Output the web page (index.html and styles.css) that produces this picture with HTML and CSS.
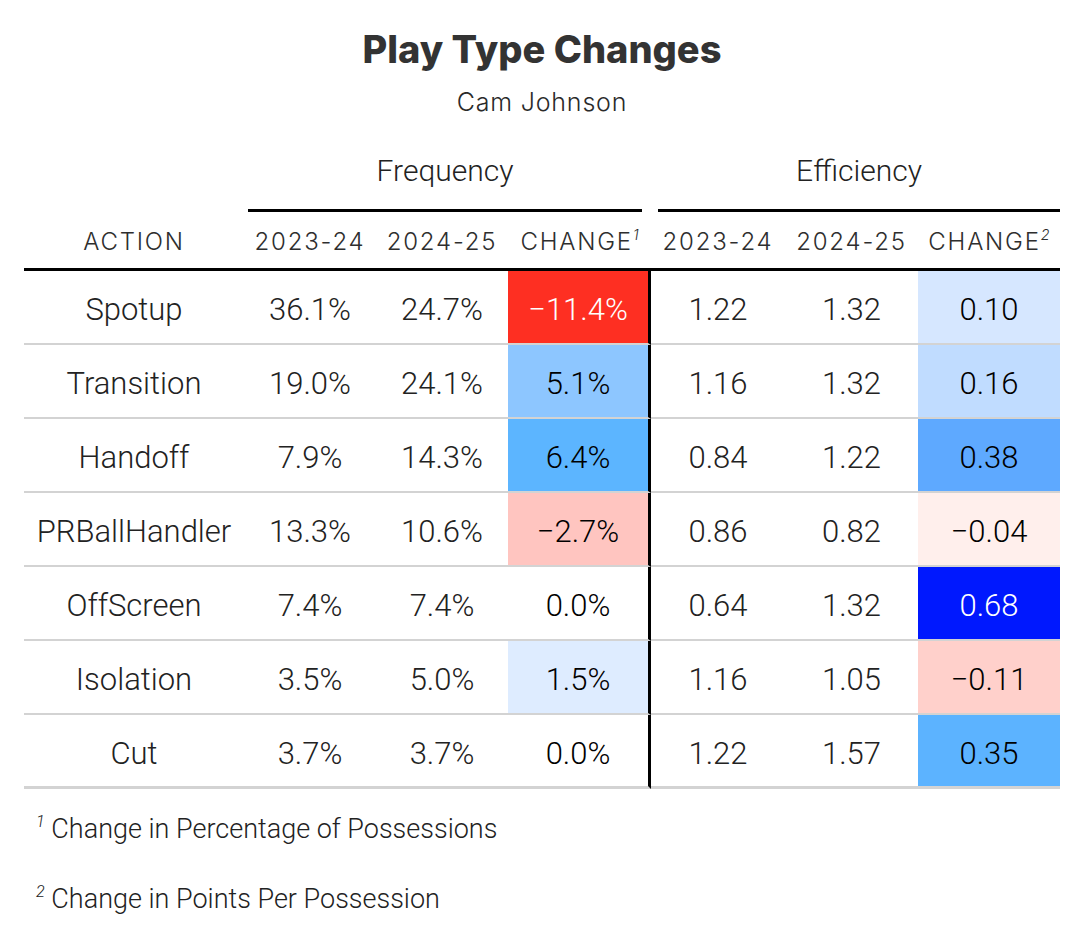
FILE: index.html
```html
<!DOCTYPE html>
<html lang="en">
<head>
<meta charset="utf-8">
<title>Play Type Changes</title>
<link rel="stylesheet" href="styles.css">
</head>
<body>
<div class="card">
  <header class="heading">
    <h1 class="title">Play Type Changes</h1>
    <p class="subtitle">Cam Johnson</p>
  </header>
  <table class="gt">
    <colgroup>
      <col class="w-action">
      <col class="w-num">
      <col class="w-num">
      <col class="w-chg">
      <col class="w-num2">
      <col class="w-num3">
      <col class="w-chg2">
    </colgroup>
    <thead>
      <tr class="spanners">
        <th></th>
        <th colspan="3"><div class="span-label span-freq">Frequency</div></th>
        <th colspan="3"><div class="span-label span-eff">Efficiency</div></th>
      </tr>
      <tr class="labels">
        <th>ACTION</th>
        <th>2023-24</th>
        <th>2024-25</th>
        <th class="divider">CHANGE<sup>1</sup></th>
        <th>2023-24</th>
        <th>2024-25</th>
        <th>CHANGE<sup>2</sup></th>
      </tr>
    </thead>
    <tbody>
      <tr>
        <td>Spotup</td><td>36.1%</td><td>24.7%</td>
        <td class="chg divider red1 light">−11.4%</td>
        <td>1.22</td><td>1.32</td>
        <td class="chg b-10">0.10</td>
      </tr>
      <tr>
        <td>Transition</td><td>19.0%</td><td>24.1%</td>
        <td class="chg divider f-51">5.1%</td>
        <td>1.16</td><td>1.32</td>
        <td class="chg b-16">0.16</td>
      </tr>
      <tr>
        <td>Handoff</td><td>7.9%</td><td>14.3%</td>
        <td class="chg divider f-64">6.4%</td>
        <td>0.84</td><td>1.22</td>
        <td class="chg b-38">0.38</td>
      </tr>
      <tr>
        <td>PRBallHandler</td><td>13.3%</td><td>10.6%</td>
        <td class="chg divider f-n27">−2.7%</td>
        <td>0.86</td><td>0.82</td>
        <td class="chg b-n04">−0.04</td>
      </tr>
      <tr>
        <td>OffScreen</td><td>7.4%</td><td>7.4%</td>
        <td class="chg divider">0.0%</td>
        <td>0.64</td><td>1.32</td>
        <td class="chg b-68 light">0.68</td>
      </tr>
      <tr>
        <td>Isolation</td><td>3.5%</td><td>5.0%</td>
        <td class="chg divider f-15">1.5%</td>
        <td>1.16</td><td>1.05</td>
        <td class="chg b-n11">−0.11</td>
      </tr>
      <tr class="last">
        <td>Cut</td><td>3.7%</td><td>3.7%</td>
        <td class="chg divider">0.0%</td>
        <td>1.22</td><td>1.57</td>
        <td class="chg b-35">0.35</td>
      </tr>
    </tbody>
  </table>
  <div class="notes">
    <p class="note"><sup>1</sup> Change in Percentage of Possessions</p>
    <p class="note"><sup>2</sup> Change in Points Per Possession</p>
  </div>
</div>
</body>
</html>
```

FILE: styles.css
```css
html, body {
  margin: 0;
  padding: 0;
  background: #ffffff;
}

.card {
  width: 1036px;
  margin-left: 24px;
  color: #333333;
  font-family: Roboto, "Noto Sans", sans-serif;
}

.heading {
  height: 140px;
  box-sizing: border-box;
  padding-top: 25px;
  text-align: center;
}

.title {
  margin: 0;
  font-family: Inter, "Liberation Sans", sans-serif;
  font-weight: 800;
  font-size: 38px;
  line-height: 48px;
  color: #333333;
}

.subtitle {
  margin: 13px 0 0;
  font-family: Inter, "Liberation Sans", sans-serif;
  font-weight: 300;
  font-size: 25px;
  letter-spacing: 0.8px;
  line-height: 32px;
  color: #2a2a2a;
}

.gt {
  border-collapse: separate;
  border-spacing: 0;
  table-layout: fixed;
  width: 1036px;
}

.w-action { width: 220px; }
.w-num { width: 132px; }
.w-chg { width: 143px; }
.w-num2 { width: 134px; }
.w-num3 { width: 133px; }
.w-chg2 { width: 142px; }

.gt th, .gt td {
  box-sizing: border-box;
  padding: 0;
  text-align: center;
  font-weight: 400;
}

.spanners th {
  height: 72px;
  vertical-align: bottom;
}

.span-label {
  font-family: Roboto, "Noto Sans", sans-serif;
  font-weight: 300;
  font-size: 30px;
  line-height: 40px;
  padding-bottom: 18px;
  border-bottom: 3px solid #000000;
  color: #222222;
}

.span-freq {
  margin-left: 4px;
  margin-right: 9px;
}

.span-eff {
  margin-left: 7px;
}

.labels th {
  height: 59px;
  border-bottom: 3px solid #000000;
  font-family: Inter, "Liberation Sans", sans-serif;
  font-size: 24px;
  font-weight: 300;
  letter-spacing: 1.8px;
  color: #2e2e2e;
  vertical-align: middle;
  padding-top: 2px;
}

.labels sup, .note sup {
  font-style: italic;
  font-size: 60%;
  line-height: 0;
  vertical-align: 0.7em;
  letter-spacing: 0;
}

.gt tbody td {
  height: 74px;
  padding-top: 5px;
  border-bottom: 2px solid #d3d3d3;
  font-size: 31px;
  font-weight: 300;
  color: #222222;
}

.gt tbody tr.last td {
  border-bottom: 3px solid #d3d3d3;
}

.gt tbody td.divider {
  border-right: 3px solid #000000;
}

.gt tbody td.chg {
  color: #000000;
}

.gt tbody td.light {
  color: #ffffff;
}

.red1 { background: #fe2f22; }
.f-51 { background: #8dc6ff; }
.f-64 { background: #5cb5ff; }
.f-n27 { background: #ffc5c0; }
.f-15 { background: #deecff; }

.b-10 { background: #d6e7ff; }
.b-16 { background: #c0dcff; }
.b-38 { background: #5ea9ff; }
.b-n04 { background: #ffefec; }
.b-68 { background: #0018fe; }
.b-n11 { background: #ffd0cb; }
.b-35 { background: #5cb3ff; }

.notes {
  padding-top: 5px;
  padding-left: 12px;
}

.note {
  margin: 0;
  font-size: 27px;
  font-weight: 300;
  line-height: 70px;
  color: #222222;
}
```
